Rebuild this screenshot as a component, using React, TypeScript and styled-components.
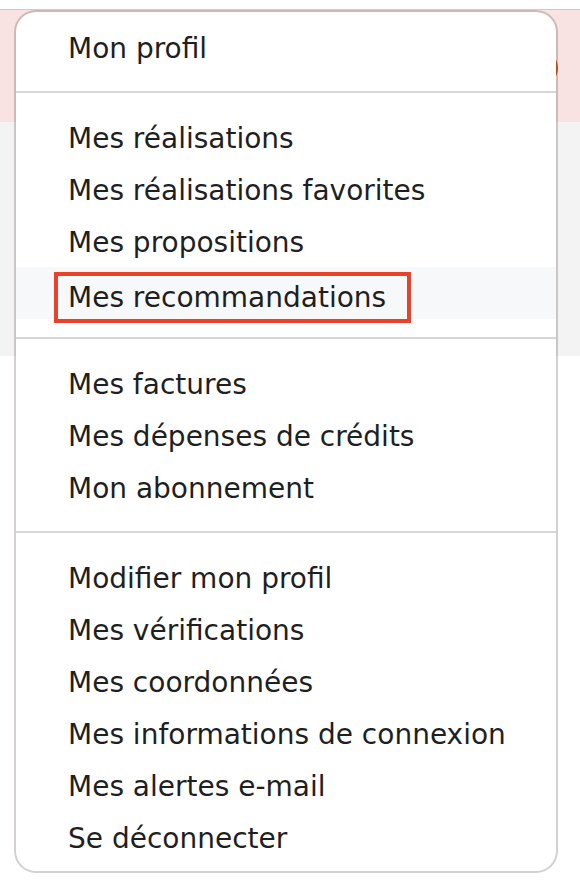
import React from "react";
import styled, { createGlobalStyle } from "styled-components";

const Global = createGlobalStyle`
  html, body { margin: 0; padding: 0; background: #ffffff; }
  body { font-family: "DejaVu Sans", "Noto Sans", sans-serif; }
`;

const Page = styled.div`
  position: relative;
  width: 580px;
  height: 884px;
  overflow: hidden;
  background: #ffffff;
`;

const TopGap = styled.div`
  height: 9px;
  background: #ffffff;
`;

const PinkBand = styled.div`
  position: relative;
  height: 112px;
  background: #f8e2e2;
  border-top: 1px solid #d8c4c4;
`;

const Avatar = styled.div`
  position: absolute;
  right: 22px;
  top: 40px;
  width: 36px;
  height: 36px;
  border-radius: 50%;
  background: #d9541e;
`;

const GreyBand = styled.div`
  height: 234px;
  background: #f3f3f3;
`;

const Menu = styled.nav`
  position: absolute;
  left: 14px;
  top: 10px;
  width: 544px;
  box-sizing: border-box;
  background: #ffffff;
  background-clip: padding-box;
  border: 2px solid rgba(60, 40, 40, 0.22);
  border-radius: 22px;
  padding: 9px 0 8px;
  display: flex;
  flex-direction: column;
`;

const Section = styled.div`
  display: flex;
  flex-direction: column;
`;

const Divider = styled.hr`
  margin: 18px 0;
  border: 0;
  height: 2px;
  background: #d6d6d6;
`;

const Item = styled.a<{ $active?: boolean }>`
  display: flex;
  align-items: center;
  height: 52px;
  padding-left: 52px;
  padding-top: 3px;
  box-sizing: border-box;
  font-family: "DejaVu Sans", "Noto Sans", sans-serif;
  font-size: 28px;
  color: #1f1f1f;
  text-decoration: none;
  white-space: nowrap;
  background: ${(p) => (p.$active ? "#f7f8fa" : "transparent")};
`;

const Marked = styled.span`
  display: inline-flex;
  align-items: center;
  box-sizing: border-box;
  margin-left: -14px;
  margin-top: 5px;
  width: 357px;
  height: 51px;
  padding-left: 10px;
  border: 4px solid #e8412c;
`;

const sections: string[][] = [
  ["Mon profil"],
  [
    "Mes réalisations",
    "Mes réalisations favorites",
    "Mes propositions",
    "Mes recommandations",
  ],
  ["Mes factures", "Mes dépenses de crédits", "Mon abonnement"],
  [
    "Modifier mon profil",
    "Mes vérifications",
    "Mes coordonnées",
    "Mes informations de connexion",
    "Mes alertes e-mail",
    "Se déconnecter",
  ],
];

export default function App() {
  return (
    <>
      <Global />
      <Page>
        <TopGap />
        <PinkBand>
          <Avatar />
        </PinkBand>
        <GreyBand />
        <Menu>
          {sections.map((items, si) => (
            <React.Fragment key={si}>
              {si > 0 && <Divider />}
              <Section>
                {items.map((label) => {
                  const active = label === "Mes recommandations";
                  return (
                    <Item key={label} href="#" $active={active}>
                      {active ? <Marked>{label}</Marked> : label}
                    </Item>
                  );
                })}
              </Section>
            </React.Fragment>
          ))}
        </Menu>
      </Page>
    </>
  );
}
